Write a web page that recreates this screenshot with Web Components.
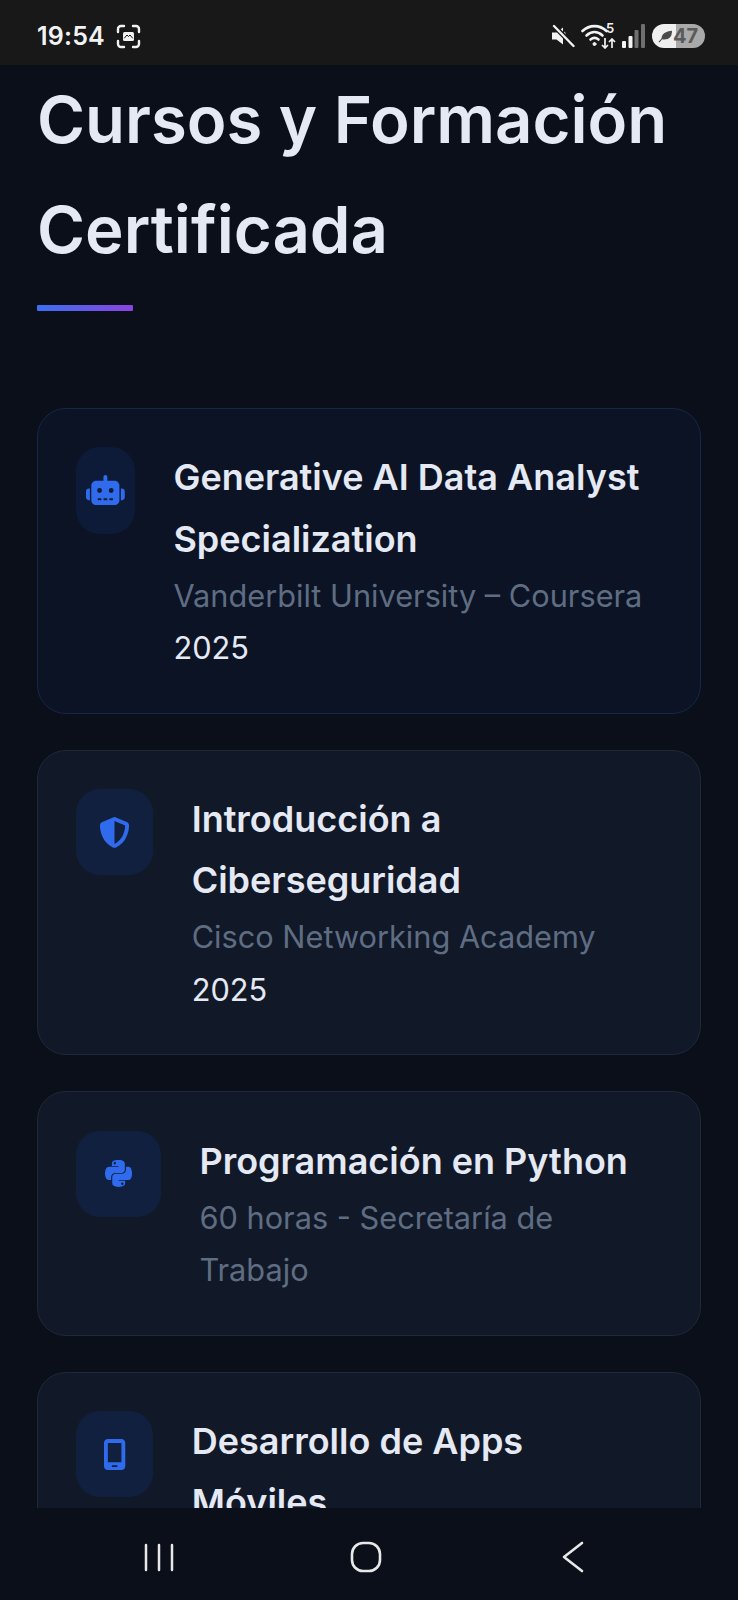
<!DOCTYPE html>
<html lang="es"><head><meta charset="utf-8"><title>Cursos</title>
<style>
html,body{margin:0;padding:0;background:#0a0f1a}
body{width:738px;height:1600px;overflow:hidden;font-family:Inter,"Liberation Sans",sans-serif}
</style></head><body>
<phone-screen>
  <status-bar slot="top"></status-bar>
  <section-title>Cursos y Formación Certificada</section-title>
  <course-list>
    <course-card variant="accent" icon="robot">
      <span slot="title">Generative AI Data Analyst Specialization</span>
      <span slot="sub">Vanderbilt University – Coursera</span>
      <span slot="year">2025</span>
    </course-card>
    <course-card icon="shield">
      <span slot="title">Introducción a Ciberseguridad</span>
      <span slot="sub">Cisco Networking Academy</span>
      <span slot="year">2025</span>
    </course-card>
    <course-card icon="python">
      <span slot="title">Programación en Python</span>
      <span slot="sub">60 horas - Secretaría de Trabajo</span>
    </course-card>
    <course-card icon="mobile" style="--text-basis:527px">
      <span slot="title">Desarrollo de Apps Móviles</span>
    </course-card>
  </course-list>
  <nav-bar slot="bottom"></nav-bar>
</phone-screen>
<script>
const define=(name,css,html)=>{
  customElements.define(name,class extends HTMLElement{
    constructor(){super();const r=this.attachShadow({mode:'open'});
      r.innerHTML=`<style>${css}</style>${typeof html==='function'?html(this):html}`;}
  });
};
define('phone-screen',`
  :host{display:flex;flex-direction:column;width:738px;height:1600px;background:#0a0f1a;color:#e2e8f0}
  main{flex:1;min-height:0;overflow:hidden;padding:0 37px}
`,`<slot name="top"></slot><main><slot></slot></main><slot name="bottom"></slot>`);

define('status-bar',`
  :host{display:flex;align-items:center;height:65px;flex:none;background:#181818;color:#f2f2f2;padding:7px 33px 0 37px;box-sizing:border-box;font-family:Inter,"Liberation Sans",sans-serif}
  .time{font-size:25px;font-weight:600;letter-spacing:.2px}
  svg{display:block;flex:none}
  .shot{margin-left:11px}
  .right{margin-left:auto;display:flex;align-items:center}
  .wifi{margin-left:6px}
  .sig{margin-left:3px}
  .bat{margin-left:7px;width:53px;height:24px;border-radius:12px;background:linear-gradient(90deg,#efefef 0 45%,#a9a9a9 45% 100%);display:flex;align-items:center;color:#5a5a5a;font-size:20px;font-weight:700;padding-left:6px;box-sizing:border-box;gap:0}
  .five{font-size:13px;font-weight:600;position:absolute;left:25px;top:-2px;line-height:14px}
  .w{position:relative;width:38px;height:26px}
`,`
  <span class="time">19:54</span>
  <svg class="shot" width="25" height="25" viewBox="0 0 25 25" fill="none" stroke="#f2f2f2" stroke-width="2.4" stroke-linecap="round"><path d="M2 8V5a3 3 0 0 1 3-3h3M17 2h3a3 3 0 0 1 3 3v3M23 17v3a3 3 0 0 1-3 3h-3M8 23H5a3 3 0 0 1-3-3v-3"/><rect x="7" y="8" width="11" height="9" rx="1.5" fill="#f2f2f2" stroke="none"/><path d="M8.5 14l2.5-3 1.5 1.5 1.5-1.5 2.5 3" stroke="#181818" stroke-width="1"/></svg>
  <div class="right">
    <svg width="24" height="24" viewBox="0 0 24 24" fill="#f2f2f2"><path d="M1 8.5h4.5L12 3.5v17l-6.500-5H1z"/><path d="M13 7.500l1.500 1.200v8z"/><path d="M2.500 1.500L23 22" stroke="#181818" stroke-width="5"/><path d="M3 2l19.500 20" stroke="#f2f2f2" stroke-width="2.400" stroke-linecap="round"/></svg>
    <div class="wifi w">
      <svg width="27" height="24" viewBox="0 0 27 24" fill="none" stroke="#f2f2f2" stroke-width="2.600" stroke-linecap="round" style="position:absolute;left:0;top:0"><path d="M1.500 8C8.500 1.500 18.500 1.500 25.500 8"/><path d="M5.500 12.500C10.500 8 16.500 8 21.500 12.500"/><path d="M9.500 16.500C12 14.500 15 14.500 17.500 16.500"/><circle cx="13.500" cy="21" r="1.500" fill="#f2f2f2" stroke-width="1"/></svg>
      <span class="five">5</span>
      <svg width="15" height="11" viewBox="0 0 15 11" fill="none" stroke="#f2f2f2" stroke-width="1.700" style="position:absolute;left:20px;top:15px"><path d="M4 0v10M1 7l3 3 3-3"/><path d="M11 10V1M8 4l3-3 3 3"/></svg>
    </div>
    <svg class="sig" width="23" height="24" viewBox="0 0 23 24"><rect x="0" y="17" width="4" height="7" rx="1" fill="#f2f2f2"/><rect x="6.500" y="12" width="4" height="12" rx="1" fill="#f2f2f2"/><rect x="12.500" y="6" width="4" height="18" rx="1" fill="#6f6f6f"/><rect x="19" y="0" width="4" height="24" rx="1" fill="#6f6f6f"/></svg>
    <div class="bat"><svg width="15" height="13" viewBox="0 0 17 15" fill="#4a4a4a"><path d="M4 10C4 4 9 2 16 1c0 7-3 10-9 10-1 0-2-.3-3-1z"/><path d="M1 14c3-4 6-6 9-7" stroke="#4a4a4a" stroke-width="1.300" fill="none"/></svg><span>47</span></div>
  </div>
`);

define('section-title',`
  :host{display:block;font-family:Inter,"Liberation Sans",sans-serif}
  h2{margin:0;font-size:65.280px;font-weight:600;line-height:110px;color:#e5e9f4}
  i{display:block;width:96px;height:6px;margin-top:20px;border-radius:1px;background:linear-gradient(90deg,#3b6ff0,#8a44e0)}
`,`<h2><slot></slot></h2><i></i>`);

define('course-list',`
  :host{display:flex;flex-direction:column;gap:36px;margin-top:97px}
`,`<slot></slot>`);

const ICONS={
 robot:[640,512,'M320 0c17.700 0 32 14.300 32 32V96H472c44.200 0 80 35.800 80 80V416c0 44.200-35.800 80-80 80H168c-44.200 0-80-35.800-80-80V176c0-44.200 35.800-80 80-80H288V32c0-17.700 14.300-32 32-32zM208 384c-8.800 0-16 7.200-16 16s7.200 16 16 16h32c8.800 0 16-7.200 16-16s-7.200-16-16-16H208zm96 0c-8.800 0-16 7.200-16 16s7.200 16 16 16h32c8.800 0 16-7.200 16-16s-7.200-16-16-16H304zm96 0c-8.800 0-16 7.200-16 16s7.200 16 16 16h32c8.800 0 16-7.200 16-16s-7.200-16-16-16H400zM264 256a40 40 0 1 0 -80 0 40 40 0 1 0 80 0zm152 40a40 40 0 1 0 0-80 40 40 0 1 0 0 80zM48 224H64V416H48c-26.500 0-48-21.500-48-48V272c0-26.500 21.500-48 48-48zm544 0c26.500 0 48 21.500 48 48v96c0 26.500-21.500 48-48 48H576V224h16z'],
 shield:[512,512,'M256 0c4.600 0 9.200 1 13.400 2.900L457.700 82.800c22 9.300 38.400 31 38.300 57.200c-.5 99.200-41.300 280.700-213.600 363.200c-16.700 8-36.100 8-52.800 0C57.300 420.700 16.500 239.200 16 140c-.1-26.200 16.300-47.900 38.300-57.200L242.700 2.900C246.800 1 251.400 0 256 0zm0 66.800V444.800C394 378 431.100 230.100 432 141.400L256 66.800l0 0z'],
 python:[448,512,'M439.800 200.500c-7.700-30.900-22.300-54.200-53.400-54.200h-40.100v47.400c0 36.800-31.200 67.800-66.800 67.800H172.700c-29.200 0-53.400 25-53.400 54.300v101.800c0 29 25.200 46 53.400 54.300 33.800 9.900 66.300 11.700 106.800 0 26.900-7.800 53.400-23.500 53.400-54.300v-40.700H226.200v-13.600h160.200c31.100 0 42.600-21.700 53.400-54.200 11.200-33.500 10.700-65.700 0-108.600zM286.200 404c11.100 0 20.100 9.100 20.100 20.300 0 11.300-9 20.400-20.100 20.400-11 0-20.100-9.200-20.100-20.400.1-11.300 9.100-20.300 20.100-20.300zM167.800 248.100h106.800c29.700 0 53.400-24.500 53.400-54.300V91.900c0-29-24.400-50.700-53.400-55.600-35.800-5.900-74.700-5.600-106.800.1-45.200 8-53.400 24.700-53.400 55.600v40.700h106.900v13.600h-147c-31.100 0-58.300 18.700-66.800 54.200-9.800 40.700-10.200 66.100 0 108.600 7.600 31.600 25.700 54.200 56.800 54.200H101v-48.800c0-35.300 30.500-66.400 66.800-66.400zm-6.700-142.600c-11.100 0-20.100-9.100-20.100-20.300.1-11.300 9-20.400 20.100-20.400 11 0 20.100 9.200 20.100 20.400s-9 20.300-20.100 20.300z'],
 mobile:[384,512,'M16 64C16 28.700 44.700 0 80 0H304c35.300 0 64 28.700 64 64V448c0 35.300-28.700 64-64 64H80c-35.300 0-64-28.700-64-64V64zM144 448c0 8.800 7.200 16 16 16h64c8.800 0 16-7.200 16-16s-7.200-16-16-16H160c-8.800 0-16 7.200-16 16zM304 64H80V384H304V64z']
};
define('course-card',`
  :host{display:flex;flex:none;gap:38.4px;align-items:flex-start;padding:38.400px;border:1px solid #1f2937;border-radius:28.800px;background:#111827;font-family:Inter,"Liberation Sans",sans-serif}
  :host([variant=accent]){background:#0b1324;border-color:#15274b}
  .tile{flex:0 1 86.400px;height:86.400px;border-radius:24px;background:#11203f;display:flex;align-items:center;justify-content:center;overflow:hidden}
  :host([variant=accent]) .tile{background:#0e1b38}
  svg{height:31px;display:block;fill:#2f6bec;flex:none}
  .text{flex:0 1 var(--text-basis,auto);min-width:0}
  .t{display:block;font-size:36px;font-weight:600;line-height:61.200px;color:#e5e9f4}
  .s{display:block;font-size:30.720px;font-weight:400;line-height:52.200px;color:#5f6d83}
  .y{display:block;font-size:30.720px;font-weight:400;line-height:52.200px;color:#e5e9f4}
`,el=>{const [w,h,d]=ICONS[el.getAttribute('icon')];
  return `<div class="tile"><svg viewBox="0 0 ${w} ${h}" width="${w/h*31}"><path d="${d}"/></svg></div>
  <div class="text"><span class="t"><slot name="title"></slot></span><span class="s"><slot name="sub"></slot></span><span class="y"><slot name="year"></slot></span></div>`});

define('nav-bar',`
  :host{display:grid;grid-template-columns:repeat(3,207px);height:92px;flex:none;background:#0b0f1a;padding:6px 0 0 55.500px;box-sizing:border-box;position:relative;z-index:1;justify-items:center;align-items:center}
  svg{display:block}
`,`
  <svg width="30" height="30" viewBox="0 0 30 30" fill="none" stroke="#e8e8e8" stroke-width="2.500" stroke-linecap="round"><path d="M2 3v25M15 3v25M28 3v25"/></svg>
  <svg width="32" height="32" viewBox="0 0 32 32" fill="none" stroke="#e8e8e8" stroke-width="2.600"><rect x="2" y="2" width="28" height="28" rx="11"/></svg>
  <svg width="24" height="32" viewBox="0 0 24 32" fill="none" stroke="#e8e8e8" stroke-width="2.600" stroke-linecap="round" stroke-linejoin="round"><path d="M21 2L3 16l18 14"/></svg>
`);
</script>
</body></html>
